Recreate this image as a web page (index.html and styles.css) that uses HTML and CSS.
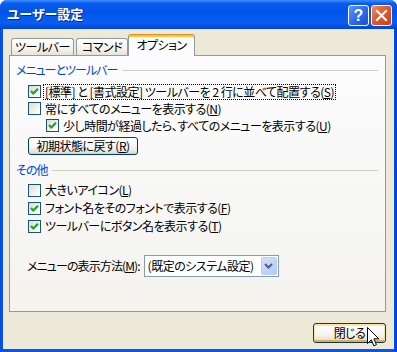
FILE: index.html
```html
<!DOCTYPE html>
<html>
<head>
    <title>ユーザー設定</title>
    <link rel="stylesheet" href="styles.css">
</head>
<body>
<div class="window">
    <div class="titlebar">
        <span class="title">ユーザー設定</span>
        <div class="caption-buttons">
            <span class="cap-btn help">?</span>
            <span class="cap-btn close">
                <svg width="13" height="13" viewBox="0 0 13 13"><path d="M2 2 L11 11 M11 2 L2 11" stroke="#fff" stroke-width="2.2" stroke-linecap="square"/></svg>
            </span>
        </div>
    </div>

    <div class="client">
        <div class="tabs">
            <span class="tab t1">ツールバー</span>
            <span class="tab t2">コマンド</span>
            <span class="tab active">オプション</span>
        </div>

        <div class="panel">
            <div class="group-head"><span>メニューとツールバー</span><i class="rule"></i></div>
            <div class="rows first">
                <label class="row">
                    <span class="check on"><svg width="11" height="11" viewBox="0 0 11 11"><path d="M2 5 L4.3 7.5 L9 2.8" fill="none" stroke="#21a121" stroke-width="2.2"/></svg></span>
                    <span class="text focus">[標準] と [書式設定] ツールバーを 2 行に並べて配置する(<u>S</u>)</span>
                </label>
                <label class="row">
                    <span class="check"></span>
                    <span class="text">常にすべてのメニューを表示する(<u>N</u>)</span>
                </label>
                <label class="row sub">
                    <span class="check on"><svg width="11" height="11" viewBox="0 0 11 11"><path d="M2 5 L4.3 7.5 L9 2.8" fill="none" stroke="#21a121" stroke-width="2.2"/></svg></span>
                    <span class="text">少し時間が経過したら、すべてのメニューを表示する(<u>U</u>)</span>
                </label>
            </div>
            <button class="btn reset" type="button">初期状態に戻す(<u>R</u>)</button>

            <div class="group-head second"><span>その他</span><i class="rule"></i></div>
            <div class="rows tall">
                <label class="row">
                    <span class="check"></span>
                    <span class="text">大きいアイコン(<u>L</u>)</span>
                </label>
                <label class="row">
                    <span class="check on"><svg width="11" height="11" viewBox="0 0 11 11"><path d="M2 5 L4.3 7.5 L9 2.8" fill="none" stroke="#21a121" stroke-width="2.2"/></svg></span>
                    <span class="text">フォント名をそのフォントで表示する(<u>F</u>)</span>
                </label>
                <label class="row">
                    <span class="check on"><svg width="11" height="11" viewBox="0 0 11 11"><path d="M2 5 L4.3 7.5 L9 2.8" fill="none" stroke="#21a121" stroke-width="2.2"/></svg></span>
                    <span class="text">ツールバーにボタン名を表示する(<u>T</u>)</span>
                </label>
            </div>

            <div class="combo-row">
                <span class="combo-label">メニューの表示方法(<u>M</u>):</span>
                <div class="combo">
                    <span class="combo-text">(既定のシステム設定)</span>
                    <span class="drop">
                        <svg width="9" height="6" viewBox="0 0 9 6"><path d="M1 1 L4.5 4.5 L8 1" fill="none" stroke="#4d6185" stroke-width="2"/></svg>
                    </span>
                </div>
            </div>
        </div>

        <div class="footer">
            <button class="btn default" type="button">閉じる</button>
        </div>
    </div>

    <svg class="cursor" width="13" height="21" viewBox="0 0 13 21">
        <path d="M0.5 0.5 V16.5 L4.3 12.8 L6.8 18.8 L9.4 17.7 L6.9 11.8 H11.8 Z" fill="#fff" stroke="#000" stroke-width="1"/>
    </svg>
</div>
</body>
</html>
```

FILE: styles.css
```css
body {
    margin: 0;
    background: #fff;
    font-family: "Noto Sans CJK JP", "Liberation Sans", sans-serif;
    font-size: 12px;
    font-feature-settings: "palt";
    letter-spacing: -0.5px;
    color: #000;
}

u {
    text-decoration: underline;
    text-underline-offset: 1px;
}

.window {
    position: relative;
    width: 397px;
    height: 352px;
    display: flex;
    flex-direction: column;
    background: linear-gradient(to right, #0a48d8, #0855ea 2px, #0855ea 394px, #0035c8);
    border-radius: 7px 7px 0 0;
    overflow: hidden;
}

.titlebar {
    height: 29px;
    flex: none;
    display: flex;
    align-items: center;
    padding: 0 5px 0 7px;
    background: linear-gradient(to bottom, #3d8dfc 0%, #0a5cf0 12%, #0054e6 40%, #0a5ef2 78%, #0046d6 100%);
}

.title {
    flex: 1;
    color: #fff;
    font-weight: bold;
    font-size: 13px;
    letter-spacing: 0;
    line-height: 16px;
    text-shadow: 1px 1px #0c2594;
    margin-top: -1px;
}

.caption-buttons {
    display: flex;
    gap: 2px;
    margin-top: 2px;
}

.cap-btn {
    width: 21px;
    height: 21px;
    box-sizing: border-box;
    border: 1px solid #fff;
    border-radius: 3px;
    display: flex;
    align-items: center;
    justify-content: center;
}

.help {
    background: linear-gradient(135deg, #5c94fb, #2a64e6 60%, #1d51d0);
    color: #fff;
    font-family: "Liberation Sans", sans-serif;
    font-weight: bold;
    font-size: 16px;
    line-height: 1;
    letter-spacing: 0;
}

.close {
    background: linear-gradient(135deg, #ef8a66, #e05a32 45%, #c9401b);
}

.client {
    flex: 1;
    margin: 0 3px 3px 3px;
    background: #ece9d8;
    padding: 5px 8px 0 6px;
    display: flex;
    flex-direction: column;
}

.tabs {
    display: flex;
    align-items: flex-end;
    height: 21px;
    padding-left: 2px;
}

.tab {
    height: 17px;
    box-sizing: border-box;
    margin-right: 2px;
    border: 1px solid #919b9c;
    border-bottom: 0;
    border-radius: 3px 3px 0 0;
    background: linear-gradient(#ffffff, #f3f2ec 60%, #e6e3d8);
    line-height: 16px;
    text-align: center;
    white-space: nowrap;
}

.tab.t1 {
    width: 63px;
}

.tab.t2 {
    width: 52px;
}

.tab.active {
    position: relative;
    z-index: 1;
    width: 67px;
    height: 22px;
    margin: 0 0 -1px -2px;
    padding-top: 2px;
    border-top: 1px solid #e68b2c;
    background: #fcfcfe;
    box-shadow: inset 0 2px 0 #ffc83c;
}

.panel {
    height: 257px;
    box-sizing: border-box;
    border: 1px solid #919b9c;
    background: linear-gradient(#fcfcfe, #f4f3ee);
    padding: 7px 7px 0 6px;
}

.group-head {
    display: flex;
    align-items: center;
    height: 14px;
    color: #0046d5;
    line-height: 14px;
    letter-spacing: -1px;
}

.group-head .rule {
    flex: 1;
    height: 1px;
    margin-left: 5px;
    background: #d0d0bf;
}

.group-head.second {
    margin-top: 8px;
}

.rows.first {
    margin-top: 6px;
}

.rows.tall {
    margin-top: 4px;
}

.row {
    display: flex;
    align-items: center;
    height: 17px;
    padding-left: 12px;
}

.rows.tall .row {
    height: 18px;
}

.row.sub {
    padding-left: 30px;
}

.check {
    width: 13px;
    height: 13px;
    box-sizing: border-box;
    border: 1px solid #1c5180;
    background: linear-gradient(135deg, #dcdcd7, #f6f6f3 70%, #ffffff);
    display: flex;
    align-items: center;
    justify-content: center;
    flex: none;
}

.text {
    margin-left: 2px;
    padding: 0 1px;
    line-height: 14px;
    border: 1px solid transparent;
    white-space: nowrap;
}

.text.focus {
    border: 1px dotted #000;
}

.btn {
    font-family: inherit;
    font-size: 12px;
    font-feature-settings: "palt";
    letter-spacing: -0.5px;
    color: #000;
    border: 1px solid #003c74;
    border-radius: 3px;
    background: linear-gradient(#ffffff, #f5f4f0 60%, #e3e0d6 90%, #d6d0c5);
    padding: 0;
    line-height: 14px;
}

.reset {
    display: block;
    width: 110px;
    height: 18px;
    margin: 3px 0 0 12px;
}

.combo-row {
    display: flex;
    align-items: center;
    margin: 20px 0 0 11px;
}

.combo-label {
    flex: none;
    margin-right: 4px;
    letter-spacing: -0.9px;
    line-height: 14px;
    white-space: nowrap;
}

.combo {
    width: 135px;
    height: 22px;
    box-sizing: border-box;
    border: 1px solid #7f9db9;
    background: #fff;
    display: flex;
    align-items: center;
    padding: 0 1px 0 3px;
}

.combo-text {
    flex: 1;
    line-height: 14px;
    white-space: nowrap;
}

.drop {
    width: 16px;
    height: 18px;
    box-sizing: border-box;
    border: 1px solid #bccdf5;
    border-radius: 2px;
    background: linear-gradient(135deg, #d2defb, #b6c9f6);
    display: flex;
    align-items: center;
    justify-content: center;
}

.footer {
    display: flex;
    justify-content: flex-end;
    padding-top: 11px;
}

.default {
    width: 73px;
    height: 20px;
    box-shadow: inset 0 1px 0 1px #fee3a4, inset 0 -1px 0 1px #f1a933;
}

.cursor {
    position: absolute;
    left: 367px;
    top: 327px;
}
```
